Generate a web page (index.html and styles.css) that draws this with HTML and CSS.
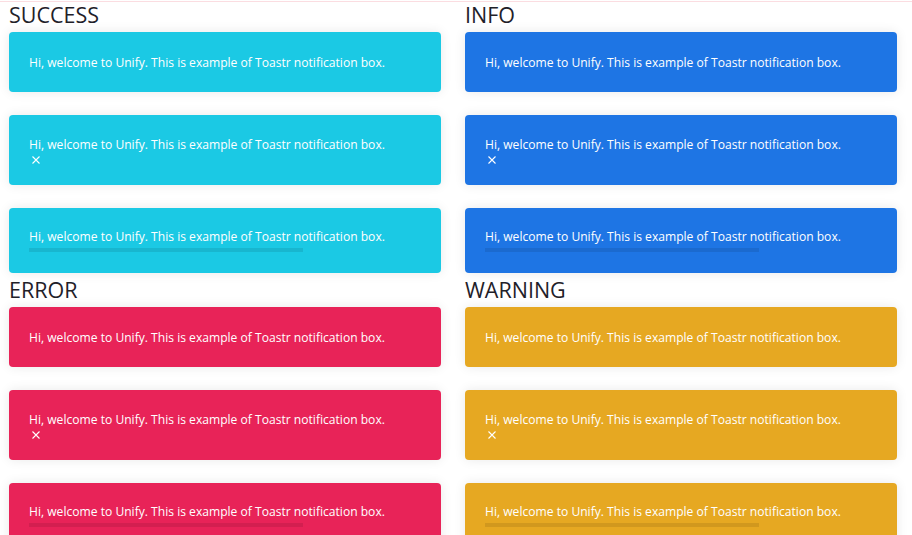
FILE: index.html
```html
<!DOCTYPE html>
<html lang="en">
<head>
<meta charset="utf-8">
<title>Toastr</title>
<link rel="stylesheet" href="styles.css">
</head>
<body>
<div class="topline"></div>
<div class="grid">
  <section class="group">
    <h2 class="title">SUCCESS</h2>
    <div class="stack">
      <div class="toast success plain"><p class="msg">Hi, welcome to Unify. This is example of Toastr notification box.</p></div>
      <div class="toast success closable"><p class="msg">Hi, welcome to Unify. This is example of Toastr notification box.</p><span class="close"><svg viewBox="0 0 8 8" width="8" height="8"><path d="M0.5 0.5L7.5 7.5M7.5 0.5L0.5 7.5" stroke="#fff" stroke-width="1.1" fill="none"/></svg></span></div>
      <div class="toast success progress"><p class="msg">Hi, welcome to Unify. This is example of Toastr notification box.</p><div class="bar"></div></div>
    </div>
  </section>
  <section class="group">
    <h2 class="title">INFO</h2>
    <div class="stack">
      <div class="toast info plain"><p class="msg">Hi, welcome to Unify. This is example of Toastr notification box.</p></div>
      <div class="toast info closable"><p class="msg">Hi, welcome to Unify. This is example of Toastr notification box.</p><span class="close"><svg viewBox="0 0 8 8" width="8" height="8"><path d="M0.5 0.5L7.5 7.5M7.5 0.5L0.5 7.5" stroke="#fff" stroke-width="1.1" fill="none"/></svg></span></div>
      <div class="toast info progress"><p class="msg">Hi, welcome to Unify. This is example of Toastr notification box.</p><div class="bar"></div></div>
    </div>
  </section>
  <section class="group second">
    <h2 class="title">ERROR</h2>
    <div class="stack">
      <div class="toast error plain"><p class="msg">Hi, welcome to Unify. This is example of Toastr notification box.</p></div>
      <div class="toast error closable"><p class="msg">Hi, welcome to Unify. This is example of Toastr notification box.</p><span class="close"><svg viewBox="0 0 8 8" width="8" height="8"><path d="M0.5 0.5L7.5 7.5M7.5 0.5L0.5 7.5" stroke="#fff" stroke-width="1.1" fill="none"/></svg></span></div>
      <div class="toast error progress"><p class="msg">Hi, welcome to Unify. This is example of Toastr notification box.</p><div class="bar"></div></div>
    </div>
  </section>
  <section class="group second">
    <h2 class="title">WARNING</h2>
    <div class="stack">
      <div class="toast warning plain"><p class="msg">Hi, welcome to Unify. This is example of Toastr notification box.</p></div>
      <div class="toast warning closable"><p class="msg">Hi, welcome to Unify. This is example of Toastr notification box.</p><span class="close"><svg viewBox="0 0 8 8" width="8" height="8"><path d="M0.5 0.5L7.5 7.5M7.5 0.5L0.5 7.5" stroke="#fff" stroke-width="1.1" fill="none"/></svg></span></div>
      <div class="toast warning progress"><p class="msg">Hi, welcome to Unify. This is example of Toastr notification box.</p><div class="bar"></div></div>
    </div>
  </section>
</div>
</body>
</html>
```
FILE: styles.css
```css
html, body {
  margin: 0;
  padding: 0;
  background: #ffffff;
  font-family: "Open Sans", "Noto Sans", sans-serif;
  overflow: hidden;
}
.topline {
  height: 1px;
  margin-top: 1px;
  background: #fbdde1;
}
.grid {
  display: grid;
  grid-template-columns: 432px 432px;
  column-gap: 24px;
  padding: 0 9px;
}
.group.second {
  margin-top: 3.5px;
}
.title {
  margin: 0 0 4.4px 0;
  height: 25.6px;
  line-height: 25.6px;
  font-size: 21.5px;
  font-weight: 500;
  color: #1f2129;
}
.stack {
  display: flex;
  flex-direction: column;
  gap: 23px;
}
.toast {
  box-sizing: border-box;
  border-radius: 4px;
  padding: 0 20px;
  color: #ffffff;
  box-shadow: 0 0 12px rgba(0, 0, 0, 0.09);
}
.toast.plain {
  height: 60px;
  padding-top: 21px;
}
.toast.closable {
  height: 70px;
  padding-top: 20px;
}
.toast.progress {
  height: 65.5px;
  padding-top: 19px;
}
.msg {
  margin: 0;
  font-size: 12.1px;
  line-height: 20px;
}
.close {
  display: block;
  height: 10px;
  padding-left: 3px;
}
.close svg {
  display: block;
  margin-top: 1px;
}
.bar {
  margin-top: 1px;
  width: 274px;
  height: 4px;
  background: rgba(0, 0, 0, 0.09);
}
.success { background: #1bc9e4; }
.info { background: #1e75e4; }
.error { background: #e82358; }
.warning { background: #e6a822; }
```
